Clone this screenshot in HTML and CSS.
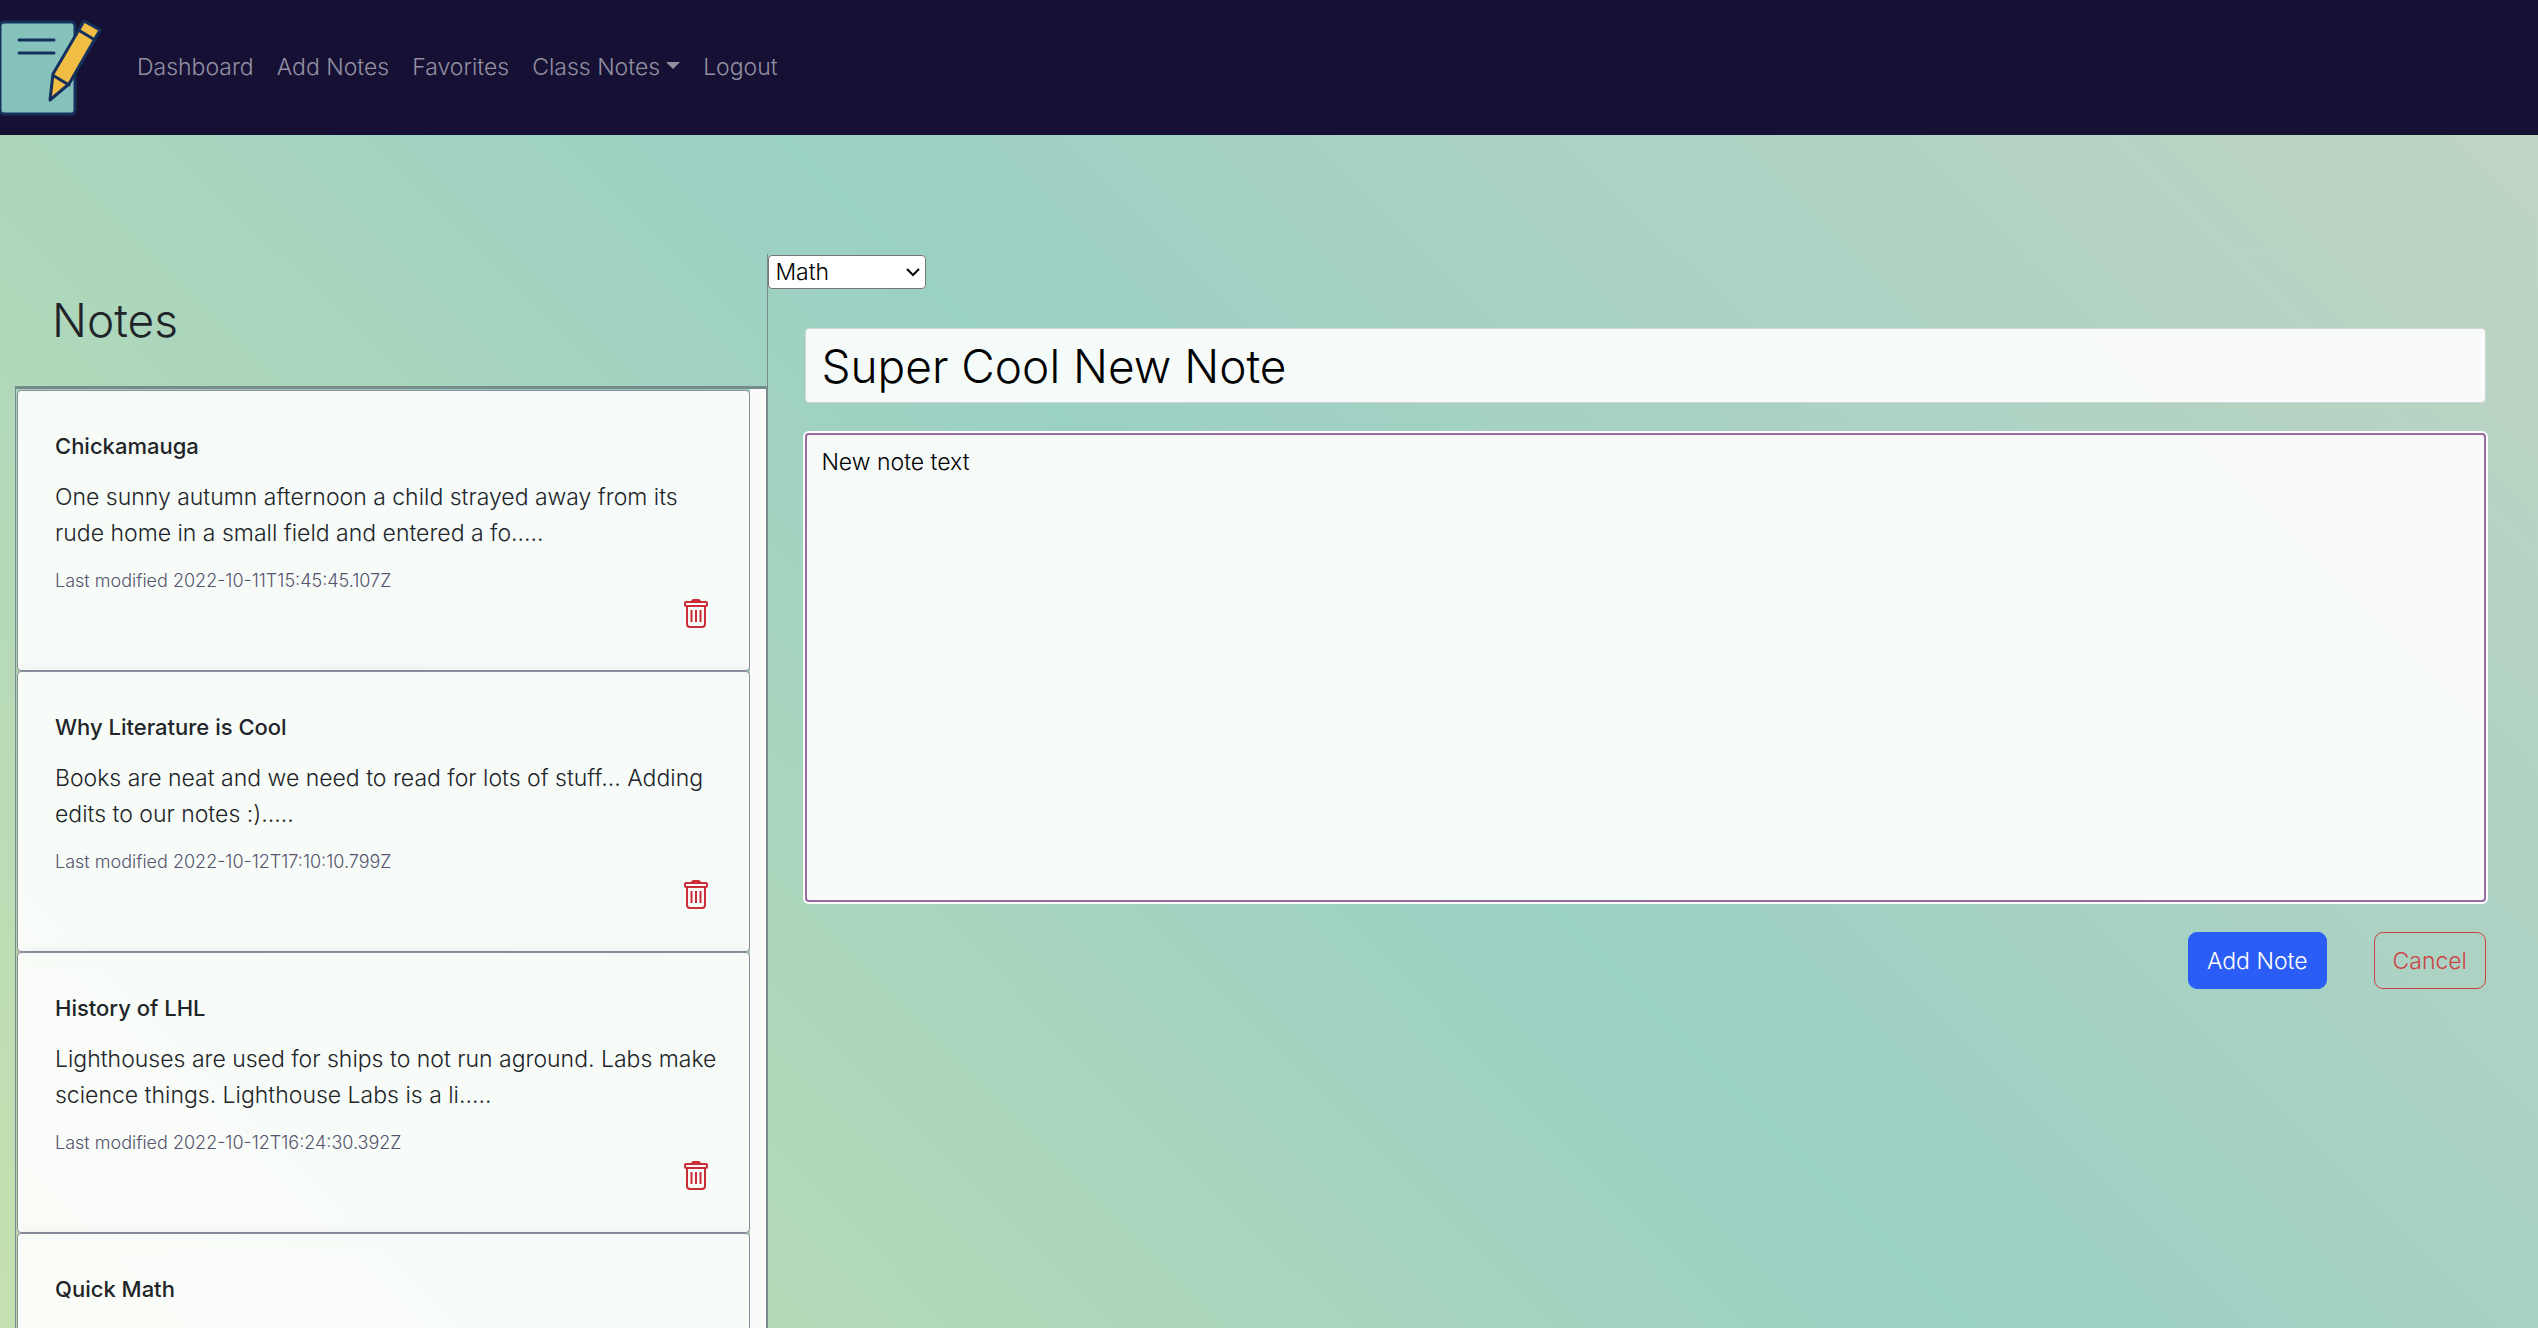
FILE: index.html
```html
<!DOCTYPE html>
<html lang="en">
<head>
<meta charset="utf-8">
<title>Notes</title>
<link rel="stylesheet" href="styles.css">
</head>
<body>
<svg class="sprite" aria-hidden="true">
  <symbol id="trash" viewBox="0 0 28 32">
    <path d="M10 4q0-2 2-2h4q2 0 2 2z" fill="currentColor"/>
    <rect x="3" y="4" width="22" height="4" rx="1"/>
    <path d="M5 8v18q0 3 3 3h12q3 0 3-3V8M9.500 12v12M14 12v12M18.500 12v12"/>
  </symbol>
</svg>
<header class="navbar">
  <a class="brand" href="#" aria-label="Home">
    <svg class="logo" viewBox="0 0 105 100" aria-hidden="true">
      <rect class="paper" x="0" y="4" width="75" height="92" rx="4"/>
      <path class="ink" d="M19 22h35M19 35h35"/>
      <path class="pencil" d="M84 3l16 9-31 54-19 16 3-26z"/>
      <path class="ink" d="M80 13l15 9M54 58l15 9"/>
    </svg>
  </a>
  <nav class="links">
    <a href="#">Dashboard</a>
    <a href="#">Add Notes</a>
    <a href="#">Favorites</a>
    <a href="#" class="dropdown">Class Notes</a>
    <a href="#">Logout</a>
  </nav>
</header>
<main class="page">
  <section class="sidebar">
    <h1>Notes</h1>
    <div class="list">
      <div class="cards">
        <article class="card">
          <h2>Chickamauga</h2>
          <p>One sunny autumn afternoon a child strayed away from its rude home in a small field and entered a fo.....</p>
          <small>Last modified 2022-10-11T15:45:45.107Z</small>
          <button class="delete" aria-label="Delete note"><svg><use href="#trash"/></svg></button>
        </article>
        <article class="card">
          <h2>Why Literature is Cool</h2>
          <p>Books are neat and we need to read for lots of stuff... Adding edits to our notes :).....</p>
          <small>Last modified 2022-10-12T17:10:10.799Z</small>
          <button class="delete" aria-label="Delete note"><svg><use href="#trash"/></svg></button>
        </article>
        <article class="card">
          <h2>History of LHL</h2>
          <p>Lighthouses are used for ships to not run aground. Labs make science things. Lighthouse Labs is a li.....</p>
          <small>Last modified 2022-10-12T16:24:30.392Z</small>
          <button class="delete" aria-label="Delete note"><svg><use href="#trash"/></svg></button>
        </article>
        <article class="card">
          <h2>Quick Math</h2>
        </article>
      </div>
      <div class="track"></div>
    </div>
  </section>
  <form class="editor">
    <select class="category" aria-label="Category"><option>Math</option></select>
    <div class="fields">
      <input class="title" type="text" aria-label="Note title" value="Super Cool New Note">
      <textarea class="text" aria-label="Note text">New note text</textarea>
      <div class="actions">
        <button type="button" class="btn primary">Add Note</button>
        <button type="button" class="btn danger">Cancel</button>
      </div>
    </div>
  </form>
</main>
</body>
</html>
```
FILE: styles.css
```css
* { box-sizing: border-box; }

body {
  margin: 0;
  height: 100vh;
  display: flex;
  flex-direction: column;
  overflow: hidden;
  font: 300 23px/36px Inter, "Liberation Sans", sans-serif;
  color: #212529;
  background: linear-gradient(45deg, #c5e0b0, #9bd0c4 51%, #c2d5c3);
}

.sprite { display: none; }

.navbar {
  flex: none;
  height: 135px;
  display: flex;
  align-items: center;
  gap: 20px;
  background: #161134;
}
.brand { display: flex; }
.logo { width: 105px; height: 100px; }
.paper { fill: #86c2bc; stroke: #16305e; stroke-width: 3; }
.ink { fill: none; stroke: #16305e; stroke-width: 3; stroke-linecap: round; }
.pencil { fill: #f0bd45; stroke: #16305e; stroke-width: 3; stroke-linejoin: round; }

.links { display: flex; }
.links a {
  padding: 10px 11px 12px 12px;
  color: #928fa1;
  text-decoration: none;
}
.dropdown::after {
  content: "";
  display: inline-block;
  margin-left: 6px;
  vertical-align: 6px;
  border-top: 7px solid;
  border-left: 7px solid transparent;
  border-right: 7px solid transparent;
}

.page {
  flex: 1;
  min-height: 0;
  display: flex;
  padding: 119px 15px 0;
}

.sidebar {
  width: 30%;
  display: flex;
  flex-direction: column;
}
h1 {
  margin: 0;
  padding: 36px 37px;
  font-size: 46px;
  line-height: 60px;
  font-weight: 300;
}
.list {
  flex: 1;
  min-height: 0;
  display: flex;
  overflow: hidden;
  border: 1px solid #768b8c;
  border-top-width: 3px;
  border-bottom: 0;
}
.cards { flex: 1; padding: 1px 0 0 1px; }
.track { width: 16px; background: #fafafa; }

.card {
  height: 281px;
  display: flex;
  flex-direction: column;
  align-items: flex-start;
  padding: 37px 39px 36px 37px;
  border: 1px solid #8b8d9c;
  border-radius: 4px;
  background: rgba(255, 255, 255, .9);
  box-shadow: 0 3px 16px rgba(0, 0, 0, .1);
}
.card h2 {
  margin: 0 0 15px;
  font-size: 22px;
  line-height: 36px;
  font-weight: 500;
}
.card p { margin: 0 -14px 16px 0; }
.card small {
  font-size: 18px;
  line-height: 28px;
  color: #55536f;
}
.delete {
  align-self: flex-end;
  display: flex;
  margin-top: 3px;
  padding: 0;
  border: 0;
  background: none;
  color: #cb2d38;
}
.delete svg {
  width: 28px;
  height: 32px;
  fill: none;
  stroke: currentColor;
  stroke-width: 2;
}

.editor {
  flex: 1;
  border-left: 1px solid #768b8c;
}
.category {
  appearance: none;
  display: block;
  width: 158px;
  height: 34px;
  margin-top: 1px;
  padding: 0 6px;
  font: inherit;
  line-height: 28px;
  color: #000;
  background: #fff url("data:image/svg+xml,%3Csvg xmlns='http://www.w3.org/2000/svg' width='14' height='10' fill='none' stroke='black' stroke-width='2'%3E%3Cpath d='M1 2l6 6 6-6'/%3E%3C/svg%3E") no-repeat right 5px center;
  border: 1px solid #767676;
  border-radius: 4px;
}
.fields {
  display: flex;
  flex-direction: column;
  gap: 30px;
  padding: 39px 37px 0;
}
.title, .text {
  display: block;
  width: 100%;
  font: inherit;
  color: #000;
  background: rgba(255, 255, 255, .9);
  border: 1px solid #d2d5d5;
  border-radius: 4px;
}
.title {
  height: 75px;
  padding: 0 15px;
  font-size: 46px;
}
.text {
  height: 469px;
  padding: 9px 14px;
  resize: none;
  border: 2px solid #9b6ba5;
  box-shadow: 0 0 0 2px #fff;
}
.actions {
  display: flex;
  justify-content: flex-end;
  gap: 47px;
}
.btn {
  height: 57px;
  padding: 0 18px;
  font: inherit;
  border-radius: 9px;
  border: 1px solid;
}
.primary { color: #fff; background: #2a5df6; border-color: #2a5df6; }
.danger { color: #cc4344; background: none; }
```
